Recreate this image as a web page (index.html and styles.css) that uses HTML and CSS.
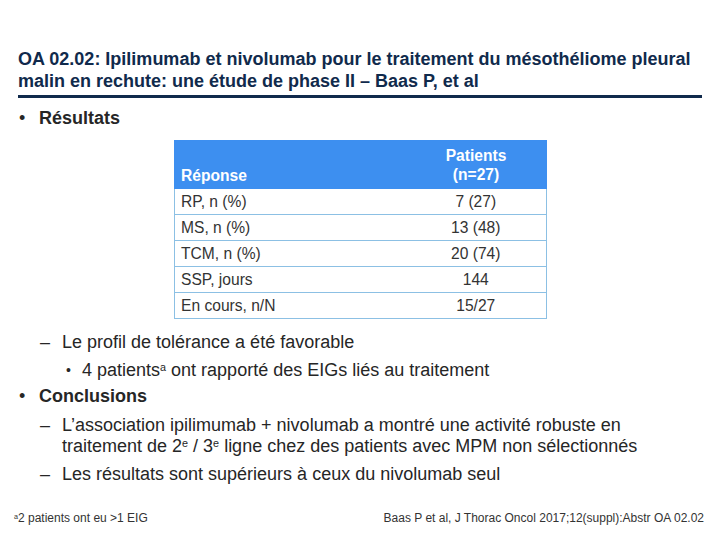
FILE: index.html
```html
<!DOCTYPE html>
<html lang="fr">
<head>
<meta charset="utf-8">
<link rel="stylesheet" href="styles.css">
</head>
<body>
<div class="slide">
  <header class="title">
    <h1>OA 02.02: Ipilimumab et nivolumab pour le traitement du mésothéliome pleural malin en rechute: une étude de phase II – Baas P, et al</h1>
  </header>
  <div class="l1 first"><span class="dot">•</span><span class="b">Résultats</span></div>
  <table class="data">
    <thead>
      <tr><th class="c1">Réponse</th><th class="c2">Patients<br>(n=27)</th></tr>
    </thead>
    <tbody>
      <tr><td class="c1">RP, n (%)</td><td class="c2">7 (27)</td></tr>
      <tr><td class="c1">MS, n (%)</td><td class="c2">13 (48)</td></tr>
      <tr><td class="c1">TCM, n (%)</td><td class="c2">20 (74)</td></tr>
      <tr><td class="c1">SSP, jours</td><td class="c2">144</td></tr>
      <tr><td class="c1">En cours, n/N</td><td class="c2">15/27</td></tr>
    </tbody>
  </table>
  <div class="l2 a"><span class="dash">–</span><span>Le profil de tolérance a été favorable</span></div>
  <div class="l3"><span class="dot3">•</span><span>4 patients<sup>a</sup> ont rapporté des EIGs liés au traitement</span></div>
  <div class="l1 c"><span class="dot">•</span><span class="b">Conclusions</span></div>
  <div class="l2 d"><span class="dash">–</span><span class="wrap">L’association ipilimumab + nivolumab a montré une activité robuste en traitement de 2<sup>e</sup> / 3<sup>e</sup> ligne chez des patients avec MPM non sélectionnés</span></div>
  <div class="l2 e"><span class="dash">–</span><span>Les résultats sont supérieurs à ceux du nivolumab seul</span></div>
  <footer class="foot">
    <span><sup>a</sup>2 patients ont eu &gt;1 EIG</span>
    <span>Baas P et al, J Thorac Oncol 2017;12(suppl):Abstr OA 02.02</span>
  </footer>
</div>
</body>
</html>
```

FILE: styles.css
```css
html, body { margin: 0; padding: 0; background: #fff; }
.slide {
  width: 720px; height: 540px; box-sizing: border-box;
  padding: 48px 18px 0 18px;
  font-family: "Liberation Sans", Arial, sans-serif;
  color: #262626;
  display: flex; flex-direction: column;
}
.title { border-bottom: 3px solid #102a4c; padding-bottom: 3px; }
.title h1 {
  margin: 0; font-size: 18px; line-height: 22px; font-weight: bold; color: #102a4c;
}
.l1 { display: flex; font-size: 18px; line-height: 21px; }
.l1 .dot { width: 20px; padding-left: 1px; flex: none; }
.b { font-weight: bold; }
.first { margin-top: 10px; }
.data {
  margin: 11px 0 0 156px; width: 373px; border-collapse: collapse;
  font-size: 15.6px; color: #333;
}
.data th {
  background: #3d8ff0; color: #fff; font-weight: bold; height: 44px;
  padding: 0 6px; border: 1px solid #3d8ff0;
}
.data th.c1 { text-align: left; vertical-align: bottom; padding-bottom: 3px; }
.data th.c2 { text-align: center; line-height: 19px; padding-top: 1px; }
.data td { height: 25px; border: 1px solid #8cc0e4; padding: 0 6px; }
.data td.c1 { border-right: none; }
.data td.c2 { border-left: none; text-align: center; }
.c1 { width: 218px; }
.l2 { display: flex; font-size: 18px; line-height: 21px; margin-left: 22px; }
.l2 .dash { width: 22px; flex: none; }
.wrap { max-width: 600px; }
.a { margin-top: 13px; }
.l3 { display: flex; font-size: 18px; line-height: 21px; margin-left: 48px; margin-top: 7px; }
.dot3 { width: 16px; flex: none; font-size: 14px; }
.c { margin-top: 5px; }
.d { margin-top: 8px; }
.e { margin-top: 7px; }
sup { font-size: 0.6em; vertical-align: 0.45em; line-height: 0; }
.foot {
  margin-top: auto; margin-bottom: 15px; display: flex; justify-content: space-between;
  font-size: 12px; color: #333; margin-left: -4px; margin-right: -2px;
}
```
